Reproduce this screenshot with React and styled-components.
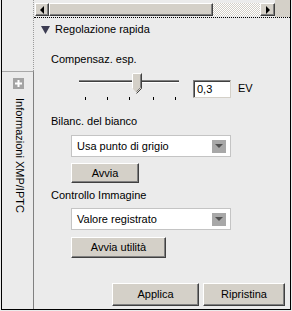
import React from "react";
import styled, { createGlobalStyle } from "styled-components";

const Global = createGlobalStyle`
  html, body { margin: 0; padding: 0; background: #ebebeb; }
  body { font-family: "Liberation Sans", Arial, sans-serif; font-size: 11px; color: #000; }
`;

const Page = styled.div`
  width: 292px;
  height: 311px;
  background: #ebebeb;
  overflow: hidden;
`;

const Frame = styled.div`
  margin: 0 1px;
  height: 309px;
  border-left: 1px solid #000;
  border-right: 1px solid #000;
  border-bottom: 1px solid #000;
  display: flex;
`;

const Gutter = styled.div`
  width: 32px;
  display: flex;
  flex-direction: column;
`;

const GutterTop = styled.div`
  height: 71px;
  border-right: 1px dotted #9a9a9a;
`;

const Tab = styled.div`
  flex: 1;
  border-top: 1px solid #a8a8a8;
  border-right: 1px solid #808080;
  display: flex;
  flex-direction: column;
  align-items: center;
  padding-top: 6px;
`;

const PlusBox = styled.div`
  width: 11px;
  height: 11px;
  background: #a4a4a4;
  display: flex;
  align-items: center;
  justify-content: center;
  margin-left: 1px;
`;

const VerticalText = styled.div`
  writing-mode: vertical-rl;
  margin-top: 9px;
  margin-left: 4px;
  font-size: 11px;
  line-height: 13px;
  white-space: nowrap;
`;

const Main = styled.div`
  flex: 1;
  display: flex;
  flex-direction: column;
`;

const TopStrip = styled.div`
  height: 17px;
  border-bottom: 1px dotted #000;
  display: flex;
`;

const ScrollBar = styled.div`
  margin: 3px 0 0 1px;
  width: 240px;
  height: 13px;
  display: flex;
`;

const Raised = styled.div`
  box-sizing: border-box;
  background: #d4d0c8;
  border-top: 1px solid #fff;
  border-left: 1px solid #fff;
  border-right: 1px solid #404040;
  border-bottom: 1px solid #404040;
  box-shadow: inset -1px -1px 0 #808080;
`;

const ArrowBtn = styled(Raised)`
  width: ${(p) => p.$w}px;
  height: 13px;
  display: flex;
  align-items: center;
  justify-content: center;
`;

const Thumb = styled(Raised)`
  width: 164px;
  height: 13px;
`;

const Track = styled.div`
  flex: 1;
  height: 13px;
  background: repeating-conic-gradient(#d4d0c8 0 25%, #ffffff 0 50%) 0 0 / 2px 2px;
`;

const Corner = styled.div`
  flex: 1;
  background: #d4d0c8;
`;

const Header = styled.div`
  margin: 5px 0 0 7px;
  height: 13px;
  line-height: 13px;
  display: flex;
  align-items: center;
  gap: 5px;
`;

const Label = styled.div`
  margin: ${(p) => p.$mt}px 0 0 17px;
  height: 13px;
  line-height: 13px;
`;

const SliderRow = styled.div`
  margin: 7px 0 0 45px;
  display: flex;
  align-items: flex-start;
`;

const Input = styled.div`
  margin: 7px 0 0 14px;
  box-sizing: border-box;
  width: 38px;
  height: 18px;
  background: #fff;
  border-top: 1px solid #808080;
  border-left: 1px solid #808080;
  border-right: 1px solid #d4d0c8;
  border-bottom: 1px solid #d4d0c8;
  box-shadow: inset 1px 1px 0 #404040;
  padding: 1px 0 0 3px;
  line-height: 14px;
`;

const Unit = styled.div`
  margin: 9px 0 0 7px;
  line-height: 13px;
`;

const Select = styled.div`
  margin: ${(p) => p.$mt}px 0 0 37px;
  box-sizing: border-box;
  width: 160px;
  height: 22px;
  background: #fff;
  border: 1px solid #c4c4c4;
  display: flex;
  align-items: center;
  justify-content: space-between;
  padding: 0 4px 0 5px;
`;

const SelectArrow = styled.div`
  width: 14px;
  height: 13px;
  background: #a8a8a8;
  display: flex;
  align-items: center;
  justify-content: center;
`;

const Button = styled(Raised)`
  width: ${(p) => p.$w}px;
  height: ${(p) => p.$h}px;
  margin-top: ${(p) => p.$mt || 0}px;
  margin-left: ${(p) => p.$ml || 0}px;
  display: flex;
  align-items: center;
  justify-content: center;
  line-height: 13px;
`;

const BottomRow = styled.div`
  margin-top: 25px;
  display: flex;
  justify-content: flex-end;
  gap: 4px;
  padding-right: 5px;
`;

const Tri = ({ dir, size = 4, color = "#000" }) => {
  const pts =
    dir === "left"
      ? `${size},0 ${size},${size * 2} 0,${size}`
      : dir === "right"
      ? `0,0 0,${size * 2} ${size},${size}`
      : `0,0 ${size * 2},0 ${size},${size}`;
  const w = dir === "down" ? size * 2 : size;
  const h = dir === "down" ? size : size * 2;
  return (
    <svg width={w} height={h} viewBox={`0 0 ${w} ${h}`} style={{ display: "block" }}>
      <polygon points={pts} fill={color} />
    </svg>
  );
};

const HeaderTri = () => (
  <svg width="9" height="8" viewBox="0 0 9 8" style={{ display: "block" }}>
    <polygon points="0,0 9,0 4.5,8" fill="#3c3c52" />
  </svg>
);

const Slider = () => (
  <svg width="100" height="28" viewBox="0 0 100 28" style={{ display: "block" }}>
    <rect x="0" y="7" width="100" height="1" fill="#808080" />
    <rect x="0" y="8" width="100" height="1" fill="#404040" />
    <rect x="0" y="9" width="100" height="1" fill="#ffffff" />
    <polygon points="53,0 63,0 63,15 58,20 53,15" fill="#d4d0c8" />
    <polyline points="53,15 53,0 62,0" fill="none" stroke="#fff" strokeWidth="1" transform="translate(0.5,0.5)" />
    <polyline points="62,0 62,15 57,20" fill="none" stroke="#404040" strokeWidth="1" transform="translate(0.5,0.5)" />
    <polyline points="61,1 61,14 57,18" fill="none" stroke="#808080" strokeWidth="1" transform="translate(0.5,0.5)" />
    {[6, 28, 50, 74, 96].map((x) => (
      <rect key={x} x={x} y="24" width="1" height="3" fill="#000" />
    ))}
  </svg>
);

export default function App() {
  return (
    <Page>
      <Global />
      <Frame>
        <Gutter>
          <GutterTop />
          <Tab>
            <PlusBox>
              <svg width="7" height="7" viewBox="0 0 7 7" style={{ display: "block" }}>
                <rect x="2.5" y="0" width="2" height="7" fill="#fff" />
                <rect x="0" y="2.5" width="7" height="2" fill="#fff" />
              </svg>
            </PlusBox>
            <VerticalText>Informazioni XMP/IPTC</VerticalText>
          </Tab>
        </Gutter>
        <Main>
          <TopStrip>
            <ScrollBar>
              <ArrowBtn $w={14}>
                <Tri dir="left" size={4} />
              </ArrowBtn>
              <Thumb />
              <Track />
              <ArrowBtn $w={15}>
                <Tri dir="right" size={4} />
              </ArrowBtn>
            </ScrollBar>
            <Corner />
          </TopStrip>
          <Header>
            <HeaderTri />
            <span>Regolazione rapida</span>
          </Header>
          <Label $mt={17}>Compensaz. esp.</Label>
          <SliderRow>
            <Slider />
            <Input>0,3</Input>
            <Unit>EV</Unit>
          </SliderRow>
          <Label $mt={14}>Bilanc. del bianco</Label>
          <Select $mt={7}>
            <span>Usa punto di grigio</span>
            <SelectArrow>
              <Tri dir="down" size={4} color="#505050" />
            </SelectArrow>
          </Select>
          <Button $w={68} $h={20} $mt={6} $ml={37}>Avvia</Button>
          <Label $mt={6}>Controllo Immagine</Label>
          <Select $mt={6}>
            <span>Valore registrato</span>
            <SelectArrow>
              <Tri dir="down" size={4} color="#505050" />
            </SelectArrow>
          </Select>
          <Button $w={95} $h={21} $mt={7} $ml={37}>Avvia utilità</Button>
          <BottomRow>
            <Button $w={87} $h={23}>Applica</Button>
            <Button $w={82} $h={23}>Ripristina</Button>
          </BottomRow>
        </Main>
      </Frame>
    </Page>
  );
}
